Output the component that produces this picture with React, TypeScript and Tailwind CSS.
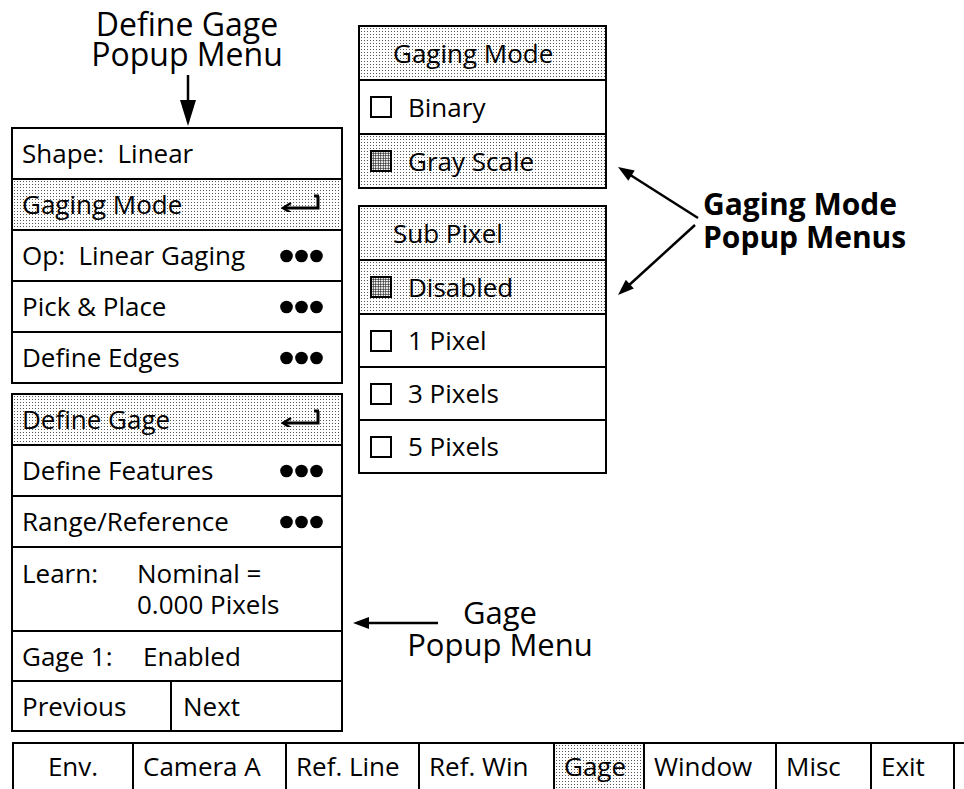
import React from "react";

const shade =
  "bg-white bg-[radial-gradient(circle,#555_0.85px,transparent_1px)] bg-[length:3px_3px]";

const Dots = () => (
  <svg width="43" height="14" viewBox="0 0 43 14" className="shrink-0">
    <circle cx="6.5" cy="7" r="6.3" fill="black" />
    <circle cx="21.5" cy="7" r="6.3" fill="black" />
    <circle cx="36.5" cy="7" r="6.3" fill="black" />
  </svg>
);

const ReturnIcon = () => (
  <svg width="42" height="20" viewBox="0 0 42 20" className="shrink-0 -mt-[6px]">
    <path d="M4 16 H37 V4 M33 4 H38" stroke="black" strokeWidth="3" fill="none" />
    <path d="M10 11 L2 16 L10 21" stroke="black" strokeWidth="2.5" fill="none" />
  </svg>
);

const Row = ({
  children,
  right,
  shaded,
  last,
}: {
  children: React.ReactNode;
  right?: React.ReactNode;
  shaded?: boolean;
  last?: boolean;
}) => (
  <div
    className={`${last ? "h-[49px]" : "h-[51px] border-b-2 border-black"} flex items-center justify-between pl-[9px] pr-[18px] ${
      shaded ? shade : ""
    }`}
  >
    <span className="whitespace-pre">{children}</span>
    {right}
  </div>
);

const CheckRow = ({
  label,
  checked,
  last,
  h = "h-[54px]",
}: {
  label: string;
  checked?: boolean;
  last?: boolean;
  h?: string;
}) => (
  <div
    className={`${h} flex items-center gap-[16px] pl-[10px] ${
      last ? "" : "border-b-2 border-black"
    } ${checked ? shade : ""}`}
  >
    <span
      className={`w-[22px] h-[22px] border-2 border-black shrink-0 ${
        checked
          ? "bg-white bg-[radial-gradient(circle,#222_0.8px,transparent_1px)] bg-[length:2.5px_2.5px]"
          : "bg-white"
      }`}
    />
    <span>{label}</span>
  </div>
);

const Header = ({ label }: { label: string }) => (
  <div className={`h-[54px] flex items-center pl-[33px] border-b-2 border-black ${shade}`}>
    {label}
  </div>
);

const tabs = [
  { label: "Env.", w: "w-[120px]", center: true },
  { label: "Camera A", w: "w-[153px]" },
  { label: "Ref. Line", w: "w-[133px]" },
  { label: "Ref. Win", w: "w-[135px]" },
  { label: "Gage", w: "w-[90px]", active: true },
  { label: "Window", w: "w-[132px]" },
  { label: "Misc", w: "w-[95px]" },
  { label: "Exit", w: "w-[85px]" },
];

const App = () => {
  return (
    <div className="relative w-[964px] h-[789px] bg-white text-black font-['Open_Sans',sans-serif] overflow-hidden flex flex-col">
      <div className="flex pl-[11px] h-[742px]">
        {/* left column */}
        <div className="w-[332px] flex flex-col text-[26px]">
          <div className="h-[127px] flex flex-col items-center pl-[20px]">
            <div className="pt-[9px] text-[32px] leading-[30px] text-center whitespace-nowrap">
              <div>Define Gage</div>
              <div>Popup Menu</div>
            </div>
            <svg width="20" height="58" viewBox="0 0 20 58" className="ml-[2px]">
              <line x1="10" y1="6" x2="10" y2="34" stroke="black" strokeWidth="2.5" />
              <polygon points="2,31 18,31 10,57" fill="black" />
            </svg>
          </div>
          <div className="border-2 border-black">
            <Row>Shape:  Linear</Row>
            <Row shaded right={<ReturnIcon />}>
              Gaging Mode
            </Row>
            <Row right={<Dots />}>Op:  Linear Gaging</Row>
            <Row right={<Dots />}>Pick &amp; Place</Row>
            <Row right={<Dots />} last>
              Define Edges
            </Row>
          </div>
          <div className="mt-[9px] border-2 border-black">
            <Row shaded right={<ReturnIcon />}>
              Define Gage
            </Row>
            <Row right={<Dots />}>Define Features</Row>
            <Row right={<Dots />}>Range/Reference</Row>
            <div className="h-[84px] flex items-center pl-[9px] border-b-2 border-black">
              <div className="flex items-start leading-[31px]">
                <span className="w-[115px]">Learn:</span>
                <div>
                  <div>Nominal =</div>
                  <div>0.000 Pixels</div>
                </div>
              </div>
            </div>
            <div className="h-[50px] flex items-center pl-[9px] border-b-2 border-black">
              <span className="w-[121px]">Gage 1:</span>
              <span>Enabled</span>
            </div>
            <div className="h-[48px] flex">
              <div className="w-[159px] flex items-center pl-[9px] border-r-2 border-black">
                Previous
              </div>
              <div className="flex items-center pl-[11px]">Next</div>
            </div>
          </div>
        </div>

        {/* middle column */}
        <div className="ml-[15px] w-[249px] pt-[25px] flex flex-col text-[26px]">
          <div className="border-2 border-black">
            <Header label="Gaging Mode" />
            <CheckRow label="Binary" />
            <CheckRow label="Gray Scale" checked last h="h-[52px]" />
          </div>
          <div className="mt-[16px] border-2 border-black">
            <Header label="Sub Pixel" />
            <CheckRow label="Disabled" checked />
            <CheckRow label="1 Pixel" h="h-[53px]" />
            <CheckRow label="3 Pixels" h="h-[53px]" />
            <CheckRow label="5 Pixels" h="h-[51px]" last />
          </div>
          <div className="mt-[122px] w-[284px] text-center text-[31px] leading-[32px] whitespace-nowrap">
            <div>Gage</div>
            <div>Popup Menu</div>
          </div>
        </div>

        {/* right column */}
        <div className="ml-[96px] pt-[187px] text-[30px] leading-[33px] font-bold whitespace-nowrap">
          <div>Gaging Mode</div>
          <div>Popup Menus</div>
        </div>
      </div>

      {/* bottom menu bar */}
      <div className="ml-[12px] flex flex-1 border-t-2 border-black text-[26px]">
        {tabs.map((t, i) => (
          <div
            key={t.label}
            className={`${t.w} flex items-center border-l-2 border-black ${
              i === tabs.length - 1 ? "border-r-2" : ""
            } ${t.center ? "justify-center" : "pl-[9px]"} ${t.active ? shade : ""}`}
          >
            {t.label}
          </div>
        ))}
      </div>

      {/* callout arrows */}
      <svg
        className="absolute inset-0 pointer-events-none"
        width="964"
        height="789"
        viewBox="0 0 964 789"
      >
        <line x1="438" y1="623" x2="366" y2="623" stroke="black" strokeWidth="2.5" />
        <polygon points="353,623 369,617 369,629" fill="black" />
        <line x1="698" y1="218" x2="628" y2="173.5" stroke="black" strokeWidth="2.5" />
        <polygon points="618,167 634.7,170.5 628.3,180.7" fill="black" />
        <line x1="695" y1="225" x2="627" y2="287" stroke="black" strokeWidth="2.5" />
        <polygon points="618,295 625.8,279.8 633.8,288.6" fill="black" />
      </svg>
    </div>
  );
};

export default App;
